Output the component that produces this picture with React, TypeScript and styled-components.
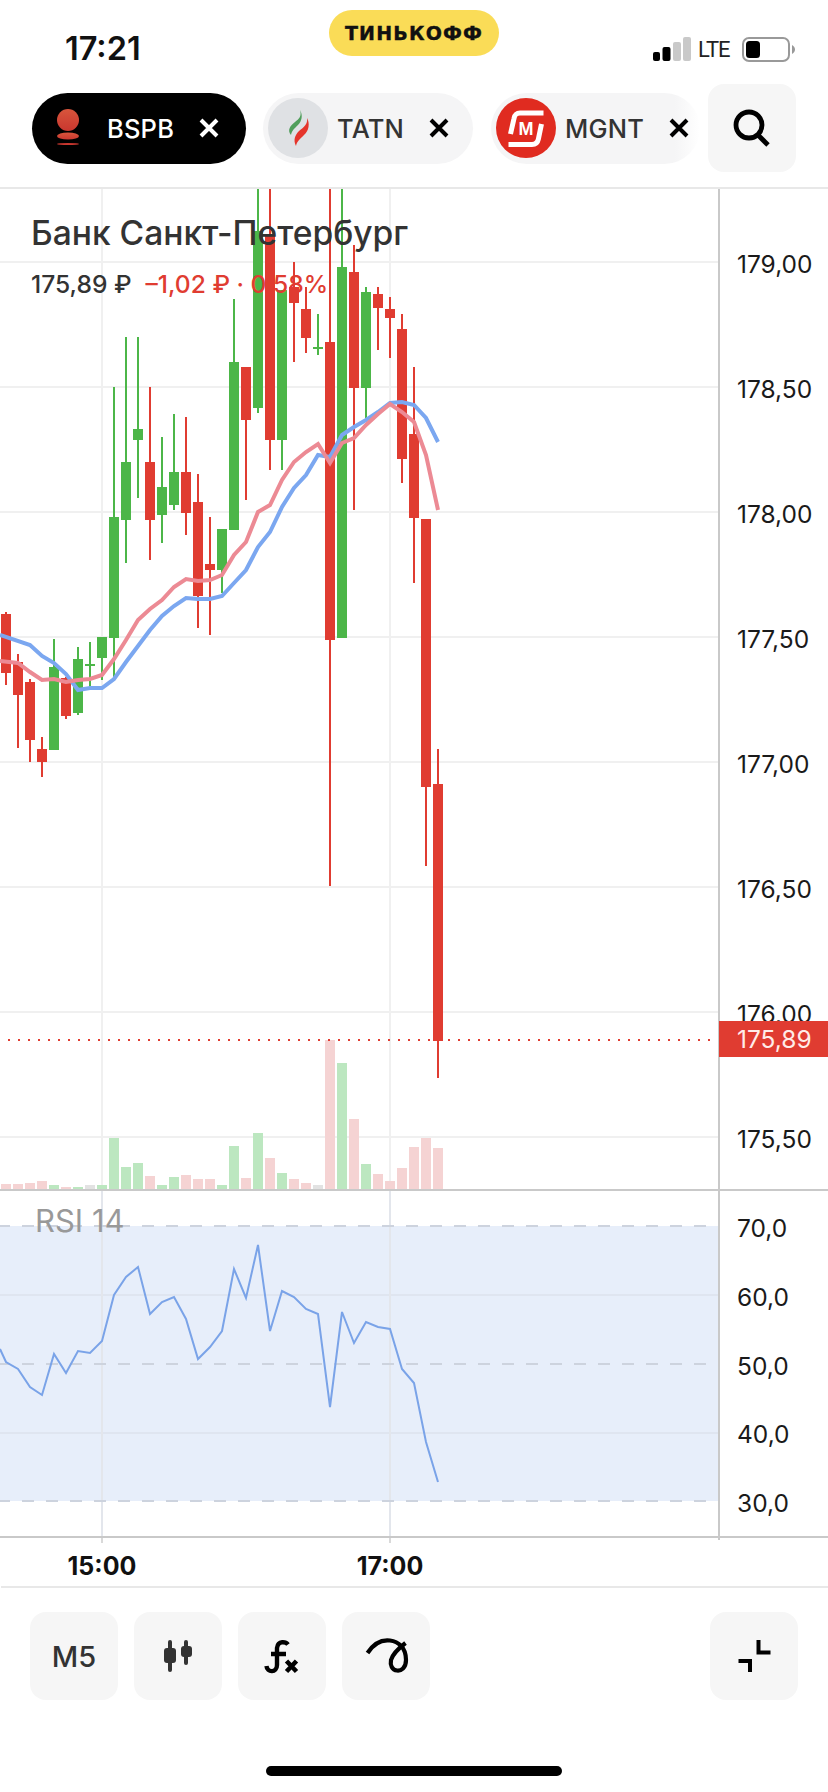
import React from 'react';
import styled, { createGlobalStyle } from 'styled-components';

const RED = '#e03c31';
const GREEN = '#4cb648';
const SANS = `Inter, 'Liberation Sans', sans-serif`;

const GlobalStyle = createGlobalStyle`
  html, body {
    margin: 0;
    padding: 0;
    background: #fff;
  }
  body {
    font-family: ${SANS};
  }
`;

const Page = styled.div`
  width: 828px;
  height: 1792px;
  overflow: hidden;
  display: flex;
  flex-direction: column;
  background: #fff;
`;

const StatusBar = styled.div`
  height: 84px;
  display: grid;
  grid-template-columns: 329px 170px 1fr;
`;

const Clock = styled.div`
  padding: 30px 0 0 65px;
  font-size: 32.5px;
  line-height: 38px;
  font-weight: 600;
  color: #111;
`;

const BrandPill = styled.div`
  margin-top: 10px;
  height: 46px;
  border-radius: 23px;
  background: #fadc57;
  display: flex;
  align-items: center;
  justify-content: center;
  font-family: 'DejaVu Sans', sans-serif;
  font-size: 19px;
  font-weight: 700;
  letter-spacing: 1.2px;
  -webkit-text-stroke: 0.4px #111;
  color: #111;
`;

const StatusIcons = styled.div`
  padding: 37px 0 0 154px;
  display: flex;
  height: 25px;
  align-items: center;
`;

const Signal = styled.svg`
  width: 38px;
  height: 25px;
  flex: none;
`;

const Lte = styled.span`
  margin-left: 7px;
  width: 44px;
  font-size: 22px;
  letter-spacing: -1px;
  line-height: 25px;
  color: #222;
  font-family: Roboto, sans-serif;
`;

const Battery = styled.svg`
  width: 54px;
  height: 25px;
  flex: none;
`;

const TabsRow = styled.div`
  height: 103px;
  box-sizing: border-box;
  padding: 0 32px 15px;
  display: flex;
  align-items: center;
`;

const Tab = styled.div<{ $active?: boolean; $width: number; $fade?: boolean; $gap: number }>`
  width: ${({ $width }) => $width}px;
  margin-right: ${({ $gap }) => $gap}px;
  flex: none;
  height: 71px;
  box-sizing: border-box;
  padding-left: ${({ $active }) => ($active ? 6 : 5)}px;
  border-radius: 36px;
  display: flex;
  align-items: center;
  gap: 9px;
  background: ${({ $active, $fade }) =>
    $active
      ? '#000'
      : $fade
        ? 'linear-gradient(90deg, #f5f5f6 88%, #ffffff 100%)'
        : '#f5f5f6'};
  color: ${({ $active }) => ($active ? '#fff' : '#333')};
`;

const TabLogo = styled.svg`
  width: 60px;
  height: 60px;
  flex: none;
`;

const Ticker = styled.span`
  font-size: 25.5px;
  font-weight: 500;
  letter-spacing: 0.2px;
`;

const CloseIcon = styled.svg<{ $light?: boolean }>`
  width: 20px;
  height: 20px;
  flex: none;
  margin-left: 16px;
  stroke: ${({ $light }) => ($light ? '#fff' : '#000')};
  stroke-width: 4;
  fill: none;
`;

const SquareButton = styled.div`
  width: 88px;
  height: 88px;
  flex: none;
  border-radius: 16px;
  background: #f6f6f6;
  display: flex;
  align-items: center;
  justify-content: center;
  font-size: 29px;
  font-weight: 500;
  color: #333;
`;

const ToolIcon = styled.svg`
  width: 48px;
  height: 48px;
  fill: none;
`;

const ChartArea = styled.div`
  border-top: 2px solid #e8e8e8;
  display: flex;
  flex-direction: column;
`;

const Panel = styled.div<{ $height: number }>`
  height: ${({ $height }) => $height}px;
  border-bottom: 2px solid #c9c9c9;
  display: flex;
`;

const Plot = styled.div`
  width: 718px;
  flex: none;
  position: relative;
  overflow: hidden;
`;

const PlotSvg = styled.svg`
  display: block;
  width: 718px;
  height: 100%;
`;

const TitleBlock = styled.div`
  position: absolute;
  left: 31px;
  top: 24px;
`;

const Title = styled.div`
  font-size: 33.6px;
  line-height: 40px;
  font-weight: 500;
  color: #333;
`;

const Quote = styled.div`
  margin-top: 16px;
  display: flex;
  gap: 14px;
  font-size: 24.6px;
  line-height: 30px;
  font-weight: 500;
  color: #333;
`;

const Change = styled.span`
  color: ${RED};
`;

const RsiLabel = styled.div`
  position: absolute;
  left: 35px;
  top: 12px;
  font-size: 31px;
  line-height: 36px;
  color: #999;
`;

const Axis = styled.div<{ $paddingTop: number }>`
  position: relative;
  flex: 1;
  border-left: 2px solid #c9c9c9;
  box-sizing: border-box;
  padding: ${({ $paddingTop }) => $paddingTop}px 0 0 17px;
`;

const AxisLabel = styled.div<{ $height: number }>`
  height: ${({ $height }) => $height}px;
  line-height: ${({ $height }) => $height}px;
  font-size: 24.5px;
  color: #1a1a1a;
`;

const PriceTag = styled.div`
  position: absolute;
  left: -1px;
  right: 0;
  top: 832px;
  height: 36px;
  box-sizing: border-box;
  padding-left: 18px;
  background: ${RED};
  color: #ffece9;
  font-size: 24.5px;
  line-height: 36px;
`;

const TimeAxis = styled.div`
  position: relative;
  height: 48px;
  margin-left: 1px;
  border-bottom: 2px solid #e8e8e8;
  display: flex;
  padding-left: 61px;
  gap: 208px;
`;

const TimeLabel = styled.div`
  position: relative;
  width: 80px;
  text-align: center;
  font-size: 25px;
  font-weight: 700;
  line-height: 56px;
  color: #111;

  &::before {
    content: '';
    position: absolute;
    left: 39px;
    top: 0;
    width: 2px;
    height: 5px;
    background: #d9d9d9;
  }
`;

const AxisTick = styled.div`
  position: absolute;
  left: 717px;
  top: 0;
  width: 2px;
  height: 2px;
  background: #c9c9c9;
`;

const Toolbar = styled.div`
  padding: 24px 30px 0 30px;
  display: flex;
  gap: 16px;
`;

const Spacer = styled.div`
  flex: 1;
`;

const HomeIndicator = styled.div`
  margin: 66px auto 0;
  width: 296px;
  height: 10px;
  border-radius: 5px;
  background: #000;
`;

type Candle = [up: number, wickTop: number, bodyTop: number, bodyBottom: number, wickBottom: number];

// price chart values are page pixels, the svg viewBox starts at the top of the panel
const candles: Candle[] = [
  [0, 612, 614, 673, 685],
  [0, 654, 662, 695, 748],
  [0, 679, 682, 740, 762],
  [0, 737, 749, 762, 777],
  [1, 639, 667, 750, 750],
  [0, 677, 678, 716, 719],
  [1, 647, 659, 713, 715],
  [1, 642, 664, 666, 687],
  [1, 637, 637, 658, 680],
  [1, 387, 517, 638, 677],
  [1, 337, 462, 520, 563],
  [1, 337, 429, 440, 498],
  [0, 387, 462, 520, 560],
  [1, 437, 487, 515, 543],
  [1, 414, 472, 505, 510],
  [0, 417, 472, 513, 535],
  [0, 474, 502, 596, 628],
  [0, 517, 564, 570, 635],
  [1, 529, 529, 570, 593],
  [1, 299, 362, 530, 530],
  [0, 367, 367, 420, 500],
  [1, 180, 231, 408, 413],
  [0, 180, 235, 440, 470],
  [1, 290, 290, 440, 470],
  [0, 262, 287, 303, 362],
  [0, 287, 309, 338, 353],
  [1, 314, 347, 349, 355],
  [0, 180, 342, 640, 886],
  [1, 180, 267, 638, 638],
  [0, 245, 272, 388, 510],
  [1, 287, 292, 388, 420],
  [0, 287, 294, 308, 350],
  [0, 297, 309, 318, 358],
  [0, 314, 329, 459, 483],
  [0, 367, 434, 518, 583],
  [0, 519, 519, 787, 866],
  [0, 749, 784, 1041, 1078],
];

const volumes: [number, string][] = [
  [1184, 'r'], [1184, 'r'], [1183, 'r'], [1181, 'r'], [1185, 'g'], [1187, 'r'], [1187, 'g'],
  [1185, 'n'], [1185, 'g'], [1138, 'g'], [1167, 'g'], [1163, 'g'], [1176, 'r'], [1185, 'g'],
  [1177, 'g'], [1175, 'r'], [1179, 'r'], [1179, 'r'], [1185, 'g'], [1146, 'g'], [1178, 'r'],
  [1133, 'g'], [1158, 'r'], [1173, 'g'], [1179, 'r'], [1183, 'r'], [1185, 'n'], [1040, 'r'],
  [1063, 'g'], [1119, 'r'], [1164, 'g'], [1174, 'r'], [1181, 'r'], [1168, 'r'], [1147, 'r'],
  [1138, 'r'], [1148, 'r'],
];

const volumeColors: Record<string, string> = { r: '#f5d3d3', g: '#bce7c0', n: '#e2e2e2' };

const blueMa = '0,635 30,645 42,656 54,663 66,674 78,690 90,688 102,688 114,679 126,662 138,646 150,630 162,616 174,606 186,598 198,599 210,599 222,596 234,583 246,570 258,547 270,532 282,507 294,488 306,475 318,455 330,457 342,435 354,427 366,420 378,412 390,403 402,402 414,405 426,418 438,442';
const pinkMa = '0,661 18,663 30,672 42,680 54,679 66,682 78,680 90,679 102,675 114,659 126,640 138,620 150,609 162,600 174,587 186,579 198,581 210,580 222,575 234,555 246,542 258,512 270,505 282,480 294,462 306,452 318,444 330,463 342,443 354,438 366,425 378,414 390,404 402,412 414,422 426,455 438,510';
const rsi = '0,1349 6,1362 18,1369 30,1387 42,1395 54,1354 66,1373 78,1351 90,1353 102,1341 114,1295 126,1277 138,1267 150,1314 162,1302 174,1297 186,1319 198,1359 210,1347 222,1331 234,1269 246,1298 258,1245 270,1331 282,1291 294,1297 306,1309 318,1314 330,1407 342,1312 354,1343 366,1322 378,1327 390,1329 402,1369 414,1383 426,1442 438,1482';

const priceLines = [262, 387, 512, 637, 762, 887, 1012, 1137];
const prices = ['179,00', '178,50', '178,00', '177,50', '177,00', '176,50', '176,00', '175,50'];
const rsiLevels = ['70,0', '60,0', '50,0', '40,0', '30,0'];

const Close: React.FC<{ light?: boolean }> = ({ light }) => (
  <CloseIcon viewBox="0 0 20 20" $light={light}>
    <path d="M2 2 18 18M18 2 2 18" />
  </CloseIcon>
);

const BspbLogo = () => (
  <TabLogo viewBox="0 0 60 60">
    <defs>
      <linearGradient id="bspb" x1="0" y1="0" x2="0" y2="1">
        <stop offset="0" stopColor="#d8553c" />
        <stop offset="1" stopColor="#c9372f" />
      </linearGradient>
    </defs>
    <circle cx="30" cy="22" r="11" fill="url(#bspb)" />
    <ellipse cx="30" cy="38" rx="11" ry="3.6" fill="url(#bspb)" />
    <ellipse cx="30" cy="46" rx="11" ry="1.1" fill="#c9372f" />
  </TabLogo>
);

const TatnLogo = () => (
  <TabLogo viewBox="0 0 60 60">
    <circle cx="30" cy="30" r="30" fill="#dfe1e4" />
    <path d="M32 12C34 18 31 21 27 24 22 28 19 32 23 37 24 32 27 30 30 27 34 23 35 17 32 12Z" fill="#4f9e5b" />
    <path d="M39 20C40 26 36 29 31 33 27 37 25 42 28 48 29 43 32 41 36 37 41 33 42 25 39 20Z" fill="#e5352b" />
  </TabLogo>
);

const MagnitLogo = () => (
  <TabLogo viewBox="0 0 60 60">
    <circle cx="30" cy="30" r="30" fill="#e02b20" />
    <g fill="none" stroke="#fff" strokeWidth="5">
      <path d="M47.5 15H24C19.5 15 18.6 17.5 18 20.5L14.5 36" />
      <path d="M12.5 46.5H36C40.5 46.5 41.8 44 42.4 41L45.5 26" />
    </g>
    <text x="30" y="37" textAnchor="middle" fontFamily="'Liberation Sans', sans-serif" fontWeight="700" fontSize="18" fill="#fff">
      М
    </text>
  </TabLogo>
);

const App: React.FC = () => {
  return (
    <Page>
      <GlobalStyle />
      <StatusBar>
        <Clock>17:21</Clock>
        <BrandPill>ТИНЬКОФФ</BrandPill>
        <StatusIcons>
          <Signal viewBox="0 0 38 25">
            <rect x="0" y="15" width="7" height="9" rx="2" fill="#000" />
            <rect x="9.5" y="10" width="8" height="14" rx="2" fill="#000" />
            <rect x="20" y="5" width="8" height="19" rx="2" fill="#c9c9c9" />
            <rect x="30" y="0" width="8" height="24" rx="2" fill="#c9c9c9" />
          </Signal>
          <Lte>LTE</Lte>
          <Battery viewBox="0 0 54 25">
            <rect x="1" y="1" width="46" height="23" rx="6" fill="none" stroke="#999" strokeWidth="2" />
            <rect x="4" y="4" width="14" height="17" rx="3.5" fill="#000" />
            <path d="M50 8C52 9 53 11 53 12.5 53 14 52 16 50 17Z" fill="#999" />
          </Battery>
        </StatusIcons>
      </StatusBar>

      <TabsRow>
        <Tab $active $width={214} $gap={17}>
          <BspbLogo />
          <Ticker>BSPB</Ticker>
          <Close light />
        </Tab>
        <Tab $width={210} $gap={18}>
          <TatnLogo />
          <Ticker>TATN</Ticker>
          <Close />
        </Tab>
        <Tab $width={209} $fade $gap={8}>
          <MagnitLogo />
          <Ticker>MGNT</Ticker>
          <Close />
        </Tab>
        <SquareButton>
          <ToolIcon viewBox="0 0 48 48" stroke="#000" strokeWidth="4.8">
            <circle cx="21" cy="21" r="13" />
            <path d="M30 31 40 41" />
          </ToolIcon>
        </SquareButton>
      </TabsRow>

      <ChartArea>
        <Panel $height={1000}>
          <Plot>
            <PlotSvg viewBox="0 189 718 1000">
              {priceLines.map((y) => (
                <rect key={y} x="0" y={y - 1} width="718" height="2" fill="#f0f0f0" />
              ))}
              <rect x="101" y="189" width="2" height="1000" fill="#f0f0f0" />
              <rect x="389" y="189" width="2" height="1000" fill="#f0f0f0" />
              {volumes.map(([top, kind], i) => (
                <rect key={i} x={1 + 12 * i} y={top} width="10" height={1189 - top} fill={volumeColors[kind]} />
              ))}
              {candles.map(([up, wt, bt, bb, wb], i) => {
                const color = up ? GREEN : RED;
                const x = 6 + 12 * i;
                return (
                  <g key={i} fill={color}>
                    <rect x={x - 1} y={wt} width="2" height={wb - wt} />
                    <rect x={x - 5} y={bt} width="10" height={bb - bt} />
                  </g>
                );
              })}
              <polyline points={blueMa} fill="none" stroke="#7ba7f0" strokeWidth="4" />
              <polyline points={pinkMa} fill="none" stroke="#ec8a94" strokeWidth="4" />
              <line x1="8" y1="1040" x2="714" y2="1040" stroke={RED} strokeWidth="2" strokeDasharray="2 8" />
            </PlotSvg>
            <TitleBlock>
              <Title>Банк Санкт-Петербург</Title>
              <Quote>
                <span>175,89 ₽</span>
                <Change>–1,02 ₽ · 0,58%</Change>
              </Quote>
            </TitleBlock>
          </Plot>
          <Axis $paddingTop={13}>
            {prices.map((p) => (
              <AxisLabel key={p} $height={125}>
                {p}
              </AxisLabel>
            ))}
            <PriceTag>175,89</PriceTag>
          </Axis>
        </Panel>
        <Panel $height={345}>
          <Plot>
            <PlotSvg viewBox="0 1191 718 345">
              <rect x="0" y="1226" width="718" height="275" fill="#e7eefa" />
              <rect x="0" y="1294" width="718" height="2" fill="#dfe5f0" />
              <rect x="0" y="1432" width="718" height="2" fill="#dfe5f0" />
              <rect x="101" y="1191" width="2" height="345" fill="#e3e6ec" />
              <rect x="389" y="1191" width="2" height="345" fill="#e3e6ec" />
              {[1226, 1364, 1501].map((y) => (
                <line key={y} x1="-2" y1={y} x2="718" y2={y} stroke="#cdd3de" strokeWidth="2" strokeDasharray="12 12" />
              ))}
              <polyline points={rsi} fill="none" stroke="#7aa3e8" strokeWidth="2" />
            </PlotSvg>
            <RsiLabel>RSI 14</RsiLabel>
          </Plot>
          <Axis $paddingTop={3}>
            {rsiLevels.map((p) => (
              <AxisLabel key={p} $height={68.75}>
                {p}
              </AxisLabel>
            ))}
          </Axis>
        </Panel>
      </ChartArea>

      <TimeAxis>
        <TimeLabel>15:00</TimeLabel>
        <TimeLabel>17:00</TimeLabel>
        <AxisTick />
      </TimeAxis>

      <Toolbar>
        <SquareButton>M5</SquareButton>
        <SquareButton>
          <ToolIcon viewBox="0 0 48 48">
            <g fill="#333">
              <rect x="14" y="8" width="4" height="32" rx="2" />
              <rect x="10" y="16" width="12" height="15" rx="3" />
              <rect x="30" y="8" width="4" height="25" rx="2" />
              <rect x="27" y="14" width="11" height="11" rx="3" />
            </g>
          </ToolIcon>
        </SquareButton>
        <SquareButton>
          <ToolIcon viewBox="0 0 48 48" stroke="#000" strokeWidth="4.4">
            <path d="M30 12.5C28 10 20 8 19 16V33C19 41 9 41 8.5 34M13 22H28" />
            <path d="M28.5 29 38.5 39.5M38.5 29 28.5 39.5" strokeWidth="4.6" />
          </ToolIcon>
        </SquareButton>
        <SquareButton>
          <ToolIcon viewBox="0 0 48 48" stroke="#000" strokeWidth="4.2">
            <path d="M5.5 21C12 11 20 7.5 28 8.5 36 9.5 44 15 44 28 44 36 39 39 35 38.5 30 38 28 33 29 28 31 21 37 16 43.5 11" />
          </ToolIcon>
        </SquareButton>
        <Spacer />
        <SquareButton>
          <ToolIcon viewBox="0 0 48 48" stroke="#000" strokeWidth="4">
            <path d="M28.5 8V20.5H40.5M8.5 29H20V40" />
          </ToolIcon>
        </SquareButton>
      </Toolbar>

      <HomeIndicator />
    </Page>
  );
};

export default App;
